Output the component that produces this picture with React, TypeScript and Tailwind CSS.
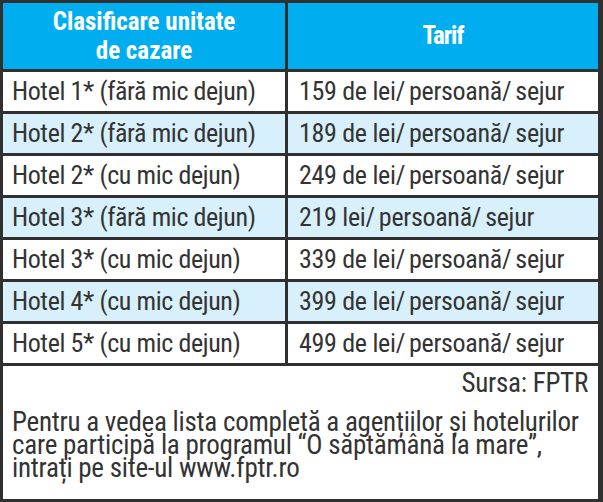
const rows = [
  { name: 'Hotel 1* (fără mic dejun)', price: ['159 de lei', 'persoană', 'sejur'], alt: false },
  { name: 'Hotel 2* (fără mic dejun)', price: ['189 de lei', 'persoană', 'sejur'], alt: true },
  { name: 'Hotel 2* (cu mic dejun)', price: ['249 de lei', 'persoană', 'sejur'], alt: false },
  { name: 'Hotel 3* (fără mic dejun)', price: ['219 lei', 'persoană', 'sejur'], alt: true },
  { name: 'Hotel 3* (cu mic dejun)', price: ['339 de lei', 'persoană', 'sejur'], alt: false },
  { name: 'Hotel 4* (cu mic dejun)', price: ['399 de lei', 'persoană', 'sejur'], alt: true },
  { name: 'Hotel 5* (cu mic dejun)', price: ['499 de lei', 'persoană', 'sejur'], alt: false },
];

function Price({ parts }: { parts: string[] }) {
  return (
    <>
      {parts[0]}
      <span className="mr-[4px]">/</span>
      {parts[1]}
      <span className="mr-[4px]">/</span>
      {parts[2]}
    </>
  );
}

export default function App() {
  return (
    <div
      className="w-[603px] h-[502px] bg-[#303030] pt-[3px] pl-[3px] pr-[5px] pb-[3px] text-[#333333]"
      style={{ fontFamily: '"Roboto Condensed", "Liberation Sans", sans-serif' }}
    >
      <div className="grid grid-cols-[282px_310px] grid-rows-[66px_repeat(7,39px)_1fr] gap-[3px] h-full">
        <div className="bg-[#00aeef] flex items-center justify-center text-center text-white font-bold text-[25px] leading-[29px]">
          Clasificare unitate
          <br />
          de cazare
        </div>
        <div className="bg-[#00aeef] flex items-center justify-center text-white font-bold text-[25px] tracking-[-1px]">
          Tarif
        </div>

        {rows.map((r) => (
          <>
            <div
              key={r.name}
              className={`${r.alt ? 'bg-[#d8f0fb]' : 'bg-white'} flex items-center pl-[9px] text-[26px] tracking-[-0.4px] whitespace-nowrap`}
            >
              {r.name}
            </div>
            <div
              key={r.price[0]}
              className={`${r.alt ? 'bg-[#d8f0fb]' : 'bg-white'} flex items-center pl-[11px] text-[26px] tracking-[-0.3px] whitespace-nowrap`}
            >
              <Price parts={r.price} />
            </div>
          </>
        ))}

        <div className="col-span-2 bg-white px-[9px] pt-[6px] text-[27px] leading-[23px] tracking-[-0.25px]">
          <div className="text-right pr-[1px]">Sursa: FPTR</div>
          <p className="mt-[16px] whitespace-nowrap">
            Pentru a vedea lista completă a agențiilor și hotelurilor
            <br />
            care participă la programul “O săptămână la mare”,
            <br />
            intrați pe site-ul www.fptr.ro
          </p>
        </div>
      </div>
    </div>
  );
}
